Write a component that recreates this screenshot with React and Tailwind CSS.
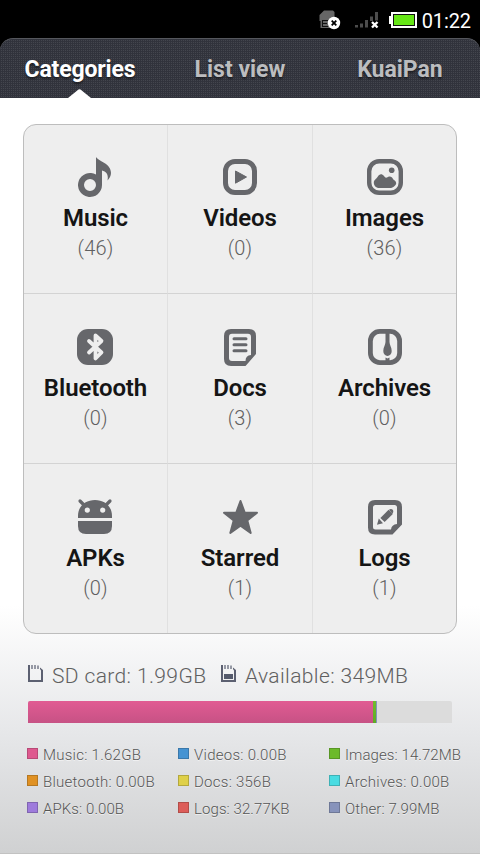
import React from 'react';
import clsx from 'clsx';

function MusicIcon() {
  return (
    <>
      <path fillRule="evenodd" d="M18 0 C20.5 4.5 33 6 33 16 C33 19 31.5 21 29.5 23.5 C30.5 18 29 15 24 13.5 V28 A12 12 0 1 1 18 17.6 Z M12 22 a6 6 0 1 0 0 12 a6 6 0 1 0 0 -12 Z" transform="translate(3 0)" />
    </>
  );
}

function VideosIcon() {
  return (
    <>
      <rect x="5.5" y="4.5" width="29" height="31" rx="9.5" fill="none" stroke="currentColor" strokeWidth="5" />
      <path d="M15.5 14 L26.5 20 L15.5 26.2 Z" stroke="currentColor" strokeWidth="1" strokeLinejoin="round" />
    </>
  );
}

function ImagesIcon() {
  return (
    <>
      <rect x="4.2" y="4.2" width="31.6" height="31.6" rx="10" fill="none" stroke="currentColor" strokeWidth="4.4" />
      <circle cx="26.7" cy="13.3" r="2.8" />
      <path d="M8.8 26 C8.8 22.5 11 22.5 12.5 20 C14.5 16.3 17 16.5 19 19 C20.5 21.2 21 21 23 20 C25.5 18.8 27.3 20.5 28 22 C29 23.5 31.2 23.5 31.2 26.5 C30.5 29 27.5 31 25 31 H14.5 C11.5 31 9 29 8.8 26 Z" />
    </>
  );
}

function BluetoothIcon() {
  return (
    <>
      <rect x="2" y="2" width="36" height="36" rx="11" />
      <path d="M14 14 L26.5 25.5 L20.5 31.5 V8.5 L26.5 14 L14 25.5" fill="none" stroke="#eee" strokeWidth="3.8" strokeLinecap="round" strokeLinejoin="round" />
    </>
  );
}

function DocsIcon() {
  return (
    <>
      <path fillRule="evenodd" d="M11 2 H29 Q36 2 36 9 V27 L25.5 39 H11 Q4 39 4 32 V9 Q4 2 11 2 Z M12 6.8 Q9 6.8 9 10 V31 Q9 34 12 34 H25.5 Q25.5 28.3 31 28 V10 Q31 6.8 28 6.8 Z" />
      <path d="M14 11.7 H26 M14 17.7 H26 M14 23.7 H26" fill="none" stroke="currentColor" strokeWidth="3" strokeLinecap="round" />
    </>
  );
}

function ArchivesIcon() {
  return (
    <>
      <rect x="5.4" y="4.4" width="29.2" height="31.2" rx="9.5" fill="none" stroke="currentColor" strokeWidth="4.8" />
      <path d="M20.5 5 H24.5 V15 C24.5 18 26.7 20 26.7 24 A4.2 5 0 0 1 18.3 24 C18.3 20 20.5 18 20.5 15 Z" />
      <path d="M20.5 30.5 L22.5 31.5 L24.5 30.5 V35 H20.5 Z" />
    </>
  );
}

function ApksIcon() {
  return (
    <>
      <path d="M5 4 L10 9 M35 4 L30 9" fill="none" stroke="currentColor" strokeWidth="3.2" strokeLinecap="round" />
      <path fillRule="evenodd" d="M3 21 V19 C3 8.5 11 3 20 3 C29 3 37 8.500 37 19 V21 Z M12.3 10.5 a2.6 2.6 0 1 0 0 5.2 a2.6 2.6 0 1 0 0 -5.2 Z M27.7 10.5 a2.6 2.6 0 1 0 0 5.2 a2.6 2.6 0 1 0 0 -5.2 Z" />
      <path d="M3 24 H37 V29 Q37 37 29 37 H11 Q3 37 3 29 Z" />
    </>
  );
}

function StarredIcon() {
  return (
    <path d="M20.5 4 L24.7 15.5 L37 15.8 L27.3 23.5 L30.7 36 L20.5 28.8 L10.3 36 L13.7 23.5 L4 15.8 L16.3 15.5 Z" stroke="currentColor" strokeWidth="2" strokeLinejoin="round" />
  );
}

function LogsIcon() {
  return (
    <>
      <path fillRule="evenodd" d="M10 3 H30 Q37 3 37 10 V27.5 L27.5 37.5 H10 Q3 37.5 3 30.5 V10 Q3 3 10 3 Z M10.5 8 Q8 8 8 10.5 V30 Q8 32.5 10.5 32.5 H26 Q26.5 27.5 32 27 V10.5 Q32 8 29.5 8 Z" />
      <path d="M17.5 23 L25.7 14.8" fill="none" stroke="currentColor" strokeWidth="6" />
      <path d="M24 12.8 Q26 11 28 13 Q29 15 27.3 16.8 Z" />
      <path d="M13.8 21.5 L18 26.3 L12 27.7 Z" />
    </>
  );
}

const tabs = [
  { name: 'Categories', active: true },
  { name: 'List view' },
  { name: 'KuaiPan' },
];

const categories = [
  { name: 'Music', count: 46, icon: MusicIcon },
  { name: 'Videos', count: 0, icon: VideosIcon },
  { name: 'Images', count: 36, icon: ImagesIcon },
  { name: 'Bluetooth', count: 0, icon: BluetoothIcon },
  { name: 'Docs', count: 3, icon: DocsIcon },
  { name: 'Archives', count: 0, icon: ArchivesIcon },
  { name: 'APKs', count: 0, icon: ApksIcon },
  { name: 'Starred', count: 1, icon: StarredIcon },
  { name: 'Logs', count: 1, icon: LogsIcon },
];

const legend = [
  { name: 'Music', size: '1.62GB', color: 'bg-[#de598f] border-[#b84a77]' },
  { name: 'Videos', size: '0.00B', color: 'bg-[#4593d2] border-[#3a78aa]' },
  { name: 'Images', size: '14.72MB', color: 'bg-[#6cba2a] border-[#589625]', tight: true },
  { name: 'Bluetooth', size: '0.00B', color: 'bg-[#e09123] border-[#b57822]' },
  { name: 'Docs', size: '356B', color: 'bg-[#dfd048] border-[#b3a83e]' },
  { name: 'Archives', size: '0.00B', color: 'bg-[#49dce2] border-[#3fb1b6]' },
  { name: 'APKs', size: '0.00B', color: 'bg-[#9e7bdc] border-[#8065b1]', tight: true },
  { name: 'Logs', size: '32.77KB', color: 'bg-[#dd5d59] border-[#b24d49]', tight: true },
  { name: 'Other', size: '7.99MB', color: 'bg-[#8793bb] border-[#6e7897]', tight: true },
];

function StatusBar() {
  return (
    <div className="flex h-[38px] items-start justify-end bg-black pr-[9px] text-white">
      <svg className="mt-[9px] mr-[14px] h-[21px] w-[22px]" viewBox="0 0 22 21">
        <path d="M0.5 6 L5 1.5 H14 L15.5 3 V19 H1.5 V12 H0.5 Z" fill="#666" />
        <path d="M3 11.5 H9 M3 14.5 H8 M3 17.5 H9 M3.500 11 V18" fill="none" stroke="#111" strokeWidth="1" />
        <circle cx="15" cy="14" r="6.2" fill="#fff" />
        <path d="M12.7 11.7 L17.3 16.3 M17.3 11.7 L12.7 16.3" stroke="#000" strokeWidth="1.8" />
      </svg>
      <svg className="mt-[11px] mr-[10px] h-[18px] w-[24px]" viewBox="0 0 24 18">
        <path d="M1.5 14 V16.5 M6.5 12.5 V16.5 M11.5 9 V16.5 M16.5 5.5 V10 M21.5 1 V9.5" stroke="#4c4c4c" strokeWidth="3" />
        <path d="M17 11 L22.500 16.500 M22.500 11 L17 16.500" stroke="#fff" strokeWidth="2.4" />
      </svg>
      <svg className="mt-[12px] mr-[5px] h-[16px] w-[28px]" viewBox="0 0 28 16">
        <path d="M0 4 H2 V0 H28 V16 H2 V12 H0 Z" fill="#fff" />
        <rect x="4" y="2" width="22" height="12" fill="#111" />
        <rect x="5" y="3" width="20" height="10" fill="#66e616" />
      </svg>
      <span className="mt-[9px] text-[20px] leading-[24px] tracking-[-0.1px]">01:22</span>
    </div>
  );
}

function TabBar() {
  return (
    <div className="bg-black">
      <div className="grid h-[60px] grid-cols-3 rounded-t-[13px] border-t border-[#55575d] bg-[#31333c] bg-[linear-gradient(90deg,#31333c_50%,transparent_50%),linear-gradient(#31333c_50%,#44464e_50%)] bg-size-[2px_2px]">
        {tabs.map((tab) => (
          <div key={tab.name} className="relative flex justify-center pt-[17px]">
            <span
              className={clsx(
                'text-[23px] leading-[28px] font-bold text-shadow-[0_2px_2px_rgb(0_0_0/0.45)]',
                tab.active ? 'tracking-[-0.15px] text-white' : 'text-[#bcbdbf]'
              )}
            >
              {tab.name}
            </span>
            {tab.active && (
              <svg className="absolute bottom-0 left-[68px] h-[9px] w-[23px]" viewBox="0 0 23 9">
                <path d="M0 9 L10.5 0.5 Q11.5 0 12.5 0.5 L23 9 Z" fill="#fff" />
              </svg>
            )}
          </div>
        ))}
      </div>
    </div>
  );
}

function CategoryCell({ item, index }) {
  const Icon = item.icon;
  const lastCol = index % 3 === 2;
  const lastRow = index > 5;
  return (
    <div
      className={clsx(
        'flex flex-col items-center',
        index < 3 ? 'pt-[32px]' : 'pt-[33px]',
        !lastCol && 'border-r border-r-[#e0e0e0]',
        !lastRow && 'border-b border-b-[#d3d3d3]'
      )}
    >
      <svg
        className={clsx('h-[40px] w-[40px] self-start text-[#66676b]', index % 3 === 0 ? 'ml-[51px]' : 'ml-[52px]')}
        viewBox="0 0 40 40"
        fill="currentColor"
      >
        <Icon />
      </svg>
      <span className="mt-[7px] text-[24px] leading-[28px] font-semibold tracking-[-0.1px] text-[#151515]">{item.name}</span>
      <span className="mt-[4px] text-[20px] leading-[24px] font-light tracking-[0.2px] text-[#606060]">({item.count})</span>
    </div>
  );
}

function CardIcon({ filled }) {
  return (
    <svg className="mt-[5px] h-[17px] w-[15px]" viewBox="0 0 15 17">
      <path d="M0 0 H2 V15 H13 V5.5 L12 4 V2.5 L15 5 V17 H0 Z" fill="#5c6071" />
      <path d="M4 0 V4 M7 0 V4 M10 0.5 V4" stroke="#777b89" strokeWidth="1.5" />
      {filled && <rect x="3" y="9" width="9" height="5" fill="#555a6c" />}
    </svg>
  );
}

function StorageInfo() {
  return (
    <div className="pt-[26px]">
      <div className="flex h-[41px] pl-[28px] text-[21px] leading-[32px] font-light tracking-[0.38px] text-[#606060]">
        <CardIcon />
        <span className="ml-[9px] w-[169px]">SD card: 1.99GB</span>
        <CardIcon filled />
        <span className="ml-[9px]">Available: 349MB</span>
      </div>
      <div className="mx-[28px] flex h-[22px] overflow-hidden rounded-t-[2px] bg-[#dcdcdc]">
        <div className="w-[345px] bg-linear-to-b from-[#e15b93] to-[#c75285]" />
        <div className="w-[3px] bg-linear-to-b from-[#6fbd2c] to-[#5fab25]" />
        <div className="w-px bg-[#8592bd]" />
      </div>
      <div className="mt-[18px] grid grid-cols-[151px_151px_auto] pl-[27px]">
        {legend.map((item) => (
          <div key={item.name} className="flex h-[27px] gap-[5px] whitespace-nowrap">
            <span className={clsx('mt-[7px] h-[11px] w-[11px] shrink-0 border', item.color)} />
            <span
              className={clsx(
                'text-[15px] leading-[29px] font-light text-[#555] text-shadow-[0_1px_0_rgb(255_255_255/0.6)]',
                item.tight ? 'tracking-[0.08px]' : 'tracking-[0.26px]'
              )}
            >
              {item.name}: {item.size}
            </span>
          </div>
        ))}
      </div>
    </div>
  );
}

function App() {
  return (
    <div className="h-[854px] w-[480px] overflow-hidden border-b border-[#c2c2c2] bg-white bg-linear-to-b from-white from-[71%] via-[#e6e7e9] via-[86%] to-[#d0d1d2] font-['Roboto',sans-serif]">
      <StatusBar />
      <TabBar />
      <div className="mx-[23px] mt-[26px] grid h-[510px] grid-cols-[144px_145px_143px] grid-rows-[169px_170px_169px] rounded-[13px] border border-[#bdbdbd] bg-[#eee]">
        {categories.map((item, index) => (
          <CategoryCell key={item.name} item={item} index={index} />
        ))}
      </div>
      <StorageInfo />
    </div>
  );
}

export default App;
